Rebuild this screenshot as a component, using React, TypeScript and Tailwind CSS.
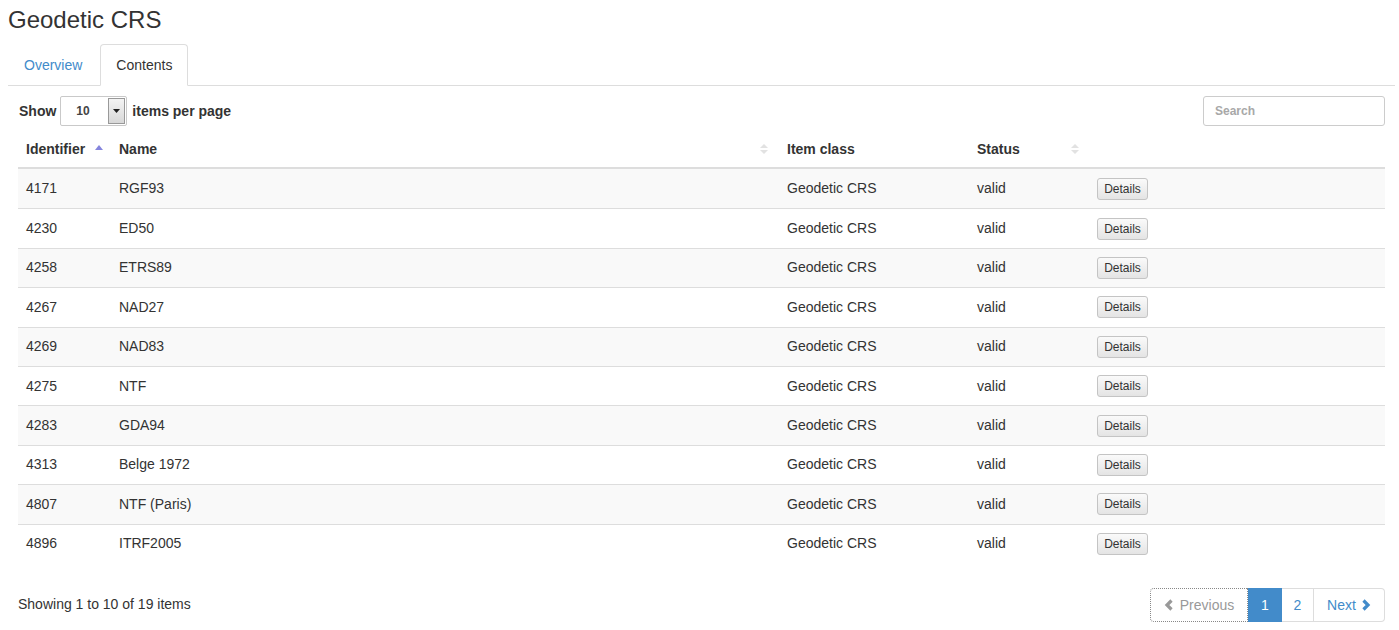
import React from "react";

const rows = [
  ["4171", "RGF93"],
  ["4230", "ED50"],
  ["4258", "ETRS89"],
  ["4267", "NAD27"],
  ["4269", "NAD83"],
  ["4275", "NTF"],
  ["4283", "GDA94"],
  ["4313", "Belge 1972"],
  ["4807", "NTF (Paris)"],
  ["4896", "ITRF2005"],
];

function SortIcon({ asc }: { asc?: boolean }) {
  if (asc) {
    return (
      <svg width="8" height="10" viewBox="0 0 8 10" className="block">
        <polygon points="0,6 8,6 4,1" fill="#8585dd" />
      </svg>
    );
  }
  return (
    <svg width="8" height="12" viewBox="0 0 8 12" className="block">
      <polygon points="0,5 8,5 4,1" fill="#e2e2e2" />
      <polygon points="0,7 8,7 4,11" fill="#e2e2e2" />
    </svg>
  );
}

function Chevron({ dir, color }: { dir: "left" | "right"; color: string }) {
  return (
    <svg width="10" height="12" viewBox="0 0 10 12" className="inline-block">
      {dir === "left" ? (
        <polyline points="7.5,1.5 3,6 7.5,10.5" fill="none" stroke={color} strokeWidth="3.2" />
      ) : (
        <polyline points="2.5,1.5 7,6 2.5,10.5" fill="none" stroke={color} strokeWidth="3.2" />
      )}
    </svg>
  );
}

export default function App() {
  return (
    <div
      className="w-[1399px] h-[630px] bg-white text-[#333] text-[14px] overflow-hidden"
      style={{ fontFamily: '"Liberation Sans", Arial, Helvetica, sans-serif' }}
    >
      <div className="pl-[8px] pr-[4px]">
        <h1 className="h-[38px] leading-[40px] text-[24px] font-normal m-0">Geodetic CRS</h1>
        <div className="mt-[6px] flex border-b border-[#ddd] h-[42px]">
          <div className="px-[16px] mr-[2px] h-[41px] leading-[42px] text-[#428bca]">Overview</div>
          <div className="px-[15px] h-[42px] leading-[40px] border border-[#ddd] border-b-white rounded-t-[4px] bg-white -mb-px">
            Contents
          </div>
        </div>
      </div>

      <div className="pl-[18px] pr-[14px]">
        <div className="mt-[10px] flex items-center justify-between h-[30px]">
          <div className="flex items-center font-bold">
            <span className="ml-[1px]">Show</span>
            <div className="ml-[4px] w-[67px] h-[30px] border border-[#c9c9c9] rounded-[2px] flex items-stretch bg-white">
              <div className="flex-1 pl-[15px] flex items-center text-[12px] font-bold text-[#444]">10</div>
              <div className="w-[17px] my-[1px] mr-[1px] border border-[#999] bg-gradient-to-b from-[#f4f4f4] to-[#d8d8d8] flex items-center justify-center">
                <svg width="7" height="4" viewBox="0 0 7 4">
                  <polygon points="0,0 7,0 3.5,4" fill="#222" />
                </svg>
              </div>
            </div>
            <span className="ml-[5px]">items per page</span>
          </div>
          <div className="w-[182px] h-[30px] border border-[#ccc] rounded-[3px] flex items-center pl-[11px] text-[12px] font-bold text-[#a8a8a8]">
            Search
          </div>
        </div>

        <div className="mt-[5px]">
          <div className="flex h-[38px] border-b-2 border-[#ddd] font-bold">
            <div className="w-[93px] px-[8px] flex items-center justify-between">
              <span>Identifier</span>
              <SortIcon asc />
            </div>
            <div className="w-[668px] px-[8px] flex items-center justify-between">
              <span>Name</span>
              <span className="mr-[3px]">
                <SortIcon />
              </span>
            </div>
            <div className="w-[190px] px-[8px] flex items-center">
              <span>Item class</span>
            </div>
            <div className="w-[120px] px-[8px] flex items-center justify-between">
              <span>Status</span>
              <span className="mr-[2px]">
                <SortIcon />
              </span>
            </div>
            <div className="flex-1" />
          </div>
          {rows.map(([id, name], i) => (
            <div
              key={id}
              className={`flex h-[39.4px] items-center ${i > 0 ? "border-t border-[#ddd]" : ""} ${
                i % 2 === 0 ? "bg-[#f9f9f9]" : "bg-white"
              }`}
            >
              <div className="w-[93px] px-[8px]">{id}</div>
              <div className="w-[668px] px-[8px]">{name}</div>
              <div className="w-[190px] px-[8px]">Geodetic CRS</div>
              <div className="w-[120px] px-[8px]">valid</div>
              <div className="flex-1 px-[8px] flex items-center">
                <div className="h-[22px] w-[51px] text-center border border-[#c4c4c4] rounded-[3px] bg-gradient-to-b from-[#fafafa] to-[#e4e4e4] text-[12px] leading-[20px] text-[#333]">
                  Details
                </div>
              </div>
            </div>
          ))}
        </div>

        <div className="mt-[25px] flex items-center justify-between">
          <div>Showing 1 to 10 of 19 items</div>
          <div className="flex h-[34px] leading-[20px]">
            <div className="w-[98px] justify-center py-[6px] border border-dotted border-[#888] rounded-l-[4px] text-[#999] flex items-center gap-[6px] bg-white">
              <Chevron dir="left" color="#999" />
              <span>Previous</span>
            </div>
            <div className="w-[34px] py-[6px] text-center bg-[#428bca] border border-[#428bca] text-white">1</div>
            <div className="w-[32px] py-[6px] text-center border border-l-0 border-[#ddd] text-[#428bca]">2</div>
            <div className="w-[71px] justify-center py-[6px] border border-l-0 border-[#ddd] rounded-r-[4px] text-[#428bca] flex items-center gap-[5px]">
              <span>Next</span>
              <Chevron dir="right" color="#428bca" />
            </div>
          </div>
        </div>
      </div>
    </div>
  );
}
